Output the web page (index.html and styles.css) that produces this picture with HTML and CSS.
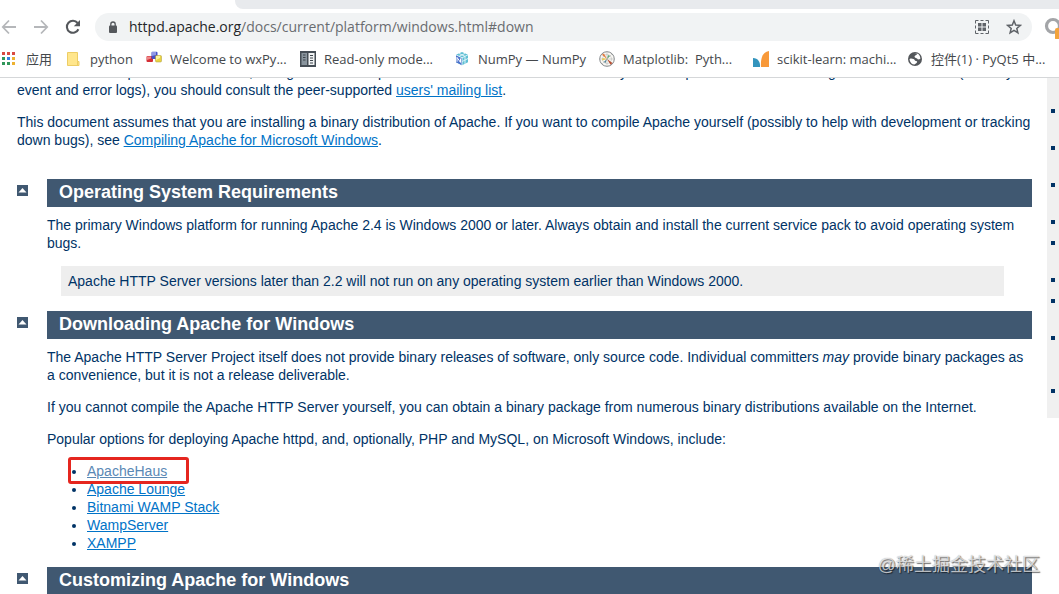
FILE: index.html
```html
<!DOCTYPE html>
<html lang="en">
<head>
<meta charset="utf-8">
<title>Using Apache HTTP Server on Microsoft Windows</title>
<link rel="stylesheet" href="styles.css">
</head>
<body>
<div class="browser">
  <header class="chrome">
    <div class="tab-strip"></div>
    <div class="toolbar">
      <button class="tool" aria-label="Back"><svg width="16" height="16" viewBox="0 0 16 16" fill="none" stroke="#b5b7ba" stroke-width="1.8"><path d="M15 8H2M8 1.5 1.8 8 8 14.5"/></svg></button>
      <button class="tool" aria-label="Forward"><svg width="16" height="16" viewBox="0 0 16 16" fill="none" stroke="#b5b7ba" stroke-width="1.8"><path d="M1 8h13M8 1.5 14.2 8 8 14.5"/></svg></button>
      <button class="tool" aria-label="Reload"><svg width="16" height="16" viewBox="0 0 16 16"><path d="M13.4 10.2A6 6 0 1 1 12.6 4" fill="none" stroke="#55585c" stroke-width="2.1"/><path d="M15 1v6.2H8.800z" fill="#55585c"/></svg></button>
      <div class="omnibox">
        <svg width="10" height="13" viewBox="0 0 10 13"><rect x="1" y="4.500" width="8" height="7.500" rx="1" fill="#55585c"/><path d="M2.800 5V3.200a2.200 2.200 0 0 1 4.400 0V5" fill="none" stroke="#55585c" stroke-width="1.300"/></svg>
        <div class="url"><span class="host">httpd.apache.org</span>/docs/current/platform/windows.html#down</div>
        <button class="tool" aria-label="QR code"><svg width="16" height="16" viewBox="0 0 16 16" fill="#5f6368"><path d="M4 4h3.500v3.500H4zM8.500 4H12v3.500H8.500zM4 8.500h3.500V12H4zM8.500 8.500H12V12H8.500z"/><path d="M1.500 4.500v-3h3M11.500 1.500h3v3M14.500 11.500v3h-3M4.500 14.500h-3v-3M6.500 1.500h3M6.500 14.500h3M1.500 6.500v3M14.500 6.500v3" fill="none" stroke="#5f6368"/></svg></button>
        <button class="tool" aria-label="Bookmark this page"><svg width="16" height="16" viewBox="0 0 16 16" fill="none" stroke="#5f6368" stroke-width="1.500"><path d="m8 1.800 1.700 4.300 4.600.3-3.500 3 1.100 4.500L8 11.400l-3.900 2.500 1.100-4.500-3.500-3 4.600-.3z"/></svg></button>
      </div>
      <button class="tool extension" aria-label="Extension"><svg width="18" height="24" viewBox="0 0 18 24"><circle cx="9" cy="11" r="6.500" fill="none" stroke="#a3a5a8" stroke-width="3.200"/><rect x="11" y="13" width="10" height="12" rx="2" fill="#f2a33c"/></svg></button>
    </div>
    <nav class="bookmarks" aria-label="Bookmarks">
      <a class="bookmark apps" href="#"><svg width="16" height="16" viewBox="0 0 16 16"><path d="M0 1h3v3H0zM5 1h3v3H5zM10 1h3v3h-3z" fill="#d94a41"/><path d="M0 6h3v3H0zM0 11h3v3H0z" fill="#31975a"/><path d="M5 6h3v3H5z" fill="#347fe0"/><path d="M5 11h3v3H5z" fill="#31975a"/><path d="M10 6h3v3h-3zM10 11h3v3h-3z" fill="#edb130"/></svg><span>应用</span></a>
      <a class="bookmark folder" href="#"><svg width="16" height="16" viewBox="0 0 16 16"><path d="M1.500 1.500h10v9h1.500v4H1.500z" fill="#ffe68c" stroke="#edcd65"/><path d="M11.500 10.500V14" stroke="#edcd65"/></svg><span>python</span></a>
      <a class="bookmark" href="#"><svg width="16" height="16" viewBox="0 0 16 16"><rect x=".5" y="5" width="6.500" height="6" rx="1" fill="#d42d35"/><path d="M1 5.500h4v2L1 9z" fill="#ed8887"/><rect x="5.500" y=".7" width="6" height="7.300" rx="1" fill="#4550c8"/><path d="M6 1h4v3L6 5z" fill="#9198e6"/><rect x="9.500" y="4.500" width="6" height="6.500" rx="1" fill="#ead340" stroke="#a99843" stroke-width=".5"/><path d="M10 5h4v2l-4 2z" fill="#faf3a0"/></svg><span>Welcome to wxPy...</span></a>
      <a class="bookmark" href="#"><svg width="16" height="16" viewBox="0 0 16 16"><path d="M0 0h16v16H0z" fill="#454d55"/><path d="M1.500 2H7v12H1.500z" fill="#89949d"/><path d="M8.500 2h6v12h-6z" fill="#f0f2f3"/><path d="M3 4h2.500M3 6.500h2.500M3 9h2.500M10 4.500h3M10 7h3M10 9.500h3M10 12h3" stroke="#3d454c"/></svg><span>Read-only mode...</span></a>
      <a class="bookmark short" href="#"><svg width="16" height="16" viewBox="0 0 16 16"><path d="m8 1 6 2.800v7.400L8 14.300l-6-3.100V3.800z" fill="#60bfd4"/><path d="m2 4 6 3v7.300l-6-3.100z" fill="#4d72cc"/><path d="m2 3.800 6 3 6-3M8 7v7M5 2.400l6 3v7.400M11 2.400 5 5.400M8.200 10.500l5.800-3" fill="none" stroke="#e5f6fa" stroke-width=".9"/><path d="M3 10.800V6.400l3.500 5V7.500" fill="none" stroke="#fff"/></svg><span>NumPy — NumPy</span></a>
      <a class="bookmark" href="#"><svg width="16" height="16" viewBox="0 0 16 16"><circle cx="8" cy="8" r="7.300" fill="#faf8f3" stroke="#85898c"/><circle cx="8" cy="8" r="4.500" fill="none" stroke="#c1c3c4" stroke-width=".7"/><path d="M8 1v14M1 8h14M3 13 13 3" stroke="#bec1c2" stroke-width=".7"/><path d="M8 8 2.800 3.800 5 2.500z" fill="#e17b43"/><path d="m8 8 5.500 4-2 1.800z" fill="#b74f34"/><path d="m8 8-5 1.500L3.500 7z" fill="#e8cd50"/><path d="m8 8 1-4 2 1z" fill="#5fa777"/><path d="m8 8-1.500 4L5 11z" fill="#4e8196"/></svg><span>Matplotlib: &nbsp;Pyth...</span></a>
      <a class="bookmark" href="#"><svg width="16" height="16" viewBox="0 0 16 16"><path d="M0 7c5 0 7.500 4 7 9H0z" fill="#3494bd"/><path d="M16 0v16H8C7.500 8 9 1 16 0z" fill="#f89939"/></svg><span>scikit-learn: machi...</span></a>
      <a class="bookmark" href="#"><svg width="16" height="16" viewBox="0 0 16 16"><circle cx="8" cy="8" r="7" fill="#54575b"/><path d="M2.500 8.500C3 7 5 7.500 6.500 8c1.500.5 1 2 2.500 2s1.500 1 .5 2l-2 1.500C5 13.500 3 11.500 2.500 8.500zM7 2.500l3 .5c0 1.500-2.500 1-2.500 2.500S10 7 11 8.500l2.300-.5c.2-2-.8-4-2.300-5.200z" fill="#fff"/></svg><span>控件(1) · PyQt5 中...</span></a>
    </nav>
  </header>

  <div class="viewport">
    <main class="page">
      <div class="intro">
        <p>This document explains how to install, configure and run Apache 2.4 under Microsoft Windows. If you have questions after reviewing the documentation (and any event and error logs), you should consult the peer-supported <a href="#">users' mailing list</a>.</p>
        <p>This document assumes that you are installing a binary distribution of Apache. If you want to compile Apache yourself (possibly to help with development or tracking down bugs), see <a href="#">Compiling Apache for Microsoft Windows</a>.</p>
      </div>

      <section class="topic">
        <a class="up" href="#" aria-label="Top"><svg width="11" height="11" viewBox="0 0 11 11"><path d="M0 0h11v11H0z" fill="#405871"/><path d="M5.500 3 9.500 7.500h-8z" fill="#fff"/></svg></a>
        <div class="body">
          <h2>Operating System Requirements</h2>
          <p>The primary Windows platform for running Apache 2.4 is Windows 2000 or later. Always obtain and install the current service pack to avoid operating system bugs.</p>
          <div class="note">Apache HTTP Server versions later than 2.2 will not run on any operating system earlier than Windows 2000.</div>
        </div>
      </section>

      <section class="topic" id="down">
        <a class="up" href="#" aria-label="Top"><svg width="11" height="11" viewBox="0 0 11 11"><path d="M0 0h11v11H0z" fill="#405871"/><path d="M5.500 3 9.500 7.500h-8z" fill="#fff"/></svg></a>
        <div class="body">
          <h2>Downloading Apache for Windows</h2>
          <p>The Apache HTTP Server Project itself does not provide binary releases of software, only source code. Individual committers <em>may</em> provide binary packages as a convenience, but it is not a release deliverable.</p>
          <p>If you cannot compile the Apache HTTP Server yourself, you can obtain a binary package from numerous binary distributions available on the Internet.</p>
          <p>Popular options for deploying Apache httpd, and, optionally, PHP and MySQL, on Microsoft Windows, include:</p>
          <ul class="options">
            <li class="marked"><a class="seen" href="#">ApacheHaus</a></li>
            <li><a href="#">Apache Lounge</a></li>
            <li><a href="#">Bitnami WAMP Stack</a></li>
            <li><a href="#">WampServer</a></li>
            <li><a href="#">XAMPP</a></li>
          </ul>
        </div>
      </section>

      <section class="topic">
        <a class="up" href="#" aria-label="Top"><svg width="11" height="11" viewBox="0 0 11 11"><path d="M0 0h11v11H0z" fill="#405871"/><path d="M5.500 3 9.500 7.500h-8z" fill="#fff"/></svg></a>
        <div class="body">
          <h2>Customizing Apache for Windows</h2>
        </div>
      </section>
    </main>
    <aside class="quickview">
      <ul>
        <li class="two"></li><li class="two"></li><li class="two"></li><li></li><li class="two"></li><li></li><li class="two"></li><li class="three"></li><li></li>
      </ul>
    </aside>
  </div>
  <div class="watermark">@稀土掘金技术社区</div>
</div>
</body>
</html>
```

FILE: styles.css
```css
*,
*::before,
*::after {
  box-sizing: border-box;
}

body {
  margin: 0;
  background: #fff;
  color: #036;
  font: 14px/18px "Liberation Sans", Arial, sans-serif;
}

svg {
  display: block;
  flex: none;
}

.browser {
  position: relative;
  display: flex;
  flex-direction: column;
  height: 100vh;
  overflow: hidden;
}

/* Browser chrome */
.chrome {
  flex: none;
  border-bottom: 1px solid #d5d7d9;
  font-family: "Open Sans", "Noto Sans CJK SC", sans-serif;
}

.tab-strip {
  height: 9px;
  margin-left: 235px;
  border-bottom-left-radius: 8px;
  background: #e8eaed;
}

.toolbar {
  display: flex;
  align-items: center;
  gap: 16px;
  height: 36px;
  padding-left: 1px;
}

.tool {
  display: flex;
  flex: none;
  padding: 0;
  border: 0;
  background: none;
}

.omnibox {
  display: flex;
  flex: 1;
  align-items: center;
  gap: 16px;
  height: 28px;
  margin-left: -2px;
  padding: 0 10px 0 13px;
  border-radius: 14px;
  background: #f1f3f4;
}

.url {
  flex: 1;
  margin-left: -5px;
  color: #696c70;
  font-size: 14px;
  line-height: 20px;
  white-space: nowrap;
}

.host {
  color: #242629;
}

.extension {
  width: 15px;
  margin-left: -4px;
  overflow: hidden;
}

.bookmarks {
  display: flex;
  align-items: center;
  gap: 17px;
  height: 32px;
  padding: 0 0 4px 2px;
  overflow: hidden;
}

.bookmark {
  display: flex;
  flex: none;
  align-items: center;
  gap: 8px;
  width: 137px;
  color: #45484c;
  font-size: 13px;
  text-decoration: none;
  white-space: nowrap;
}

.apps {
  width: 47px;
}

.folder {
  width: 63px;
}

.short {
  width: 128px;
}

/* Document */
.viewport {
  display: flex;
  flex: 1;
  align-items: flex-start;
  gap: 15px;
  min-height: 0;
  overflow: hidden;
}

.page {
  flex: 1;
  min-width: 0;
  margin-top: -15px;
  padding-left: 17px;
}

.intro {
  margin-bottom: 30px;
}

p {
  margin: 0 0 14px;
}

a {
  color: #0073c7;
}

.seen {
  color: #5a88b5;
}

.topic {
  display: flex;
  gap: 19px;
  margin-bottom: 15px;
}

.up {
  flex: none;
  padding-top: 6px;
}

.body {
  flex: 1;
}

h2 {
  margin: 0 0 9px;
  padding: 3px 12px 4px;
  background: #405871;
  color: #fff;
  font-size: 18px;
  line-height: 21px;
}

.note {
  margin: 0 28px 0 14px;
  padding: 6px 7px;
  background: #eee;
}

.options {
  margin: 0;
  padding-left: 40px;
}

.marked {
  position: relative;
}

.marked::after {
  position: absolute;
  top: -5px;
  left: -19px;
  width: 121px;
  height: 27px;
  border: 3px solid #e5261f;
  border-radius: 3px;
  content: "";
}

.quickview {
  flex: none;
  width: 12px;
  padding-top: 25px;
  background: #f0f0f0;
}

.quickview ul {
  margin: 0;
  padding: 0 0 14px 4px;
  list-style: none;
}

.quickview li {
  height: 21px;
  padding-top: 6px;
}

.quickview .two {
  height: 37px;
}

.quickview .three {
  height: 53px;
}

.quickview li::before {
  display: block;
  width: 4px;
  height: 4px;
  background: #036;
  content: "";
}

.watermark {
  position: absolute;
  right: 19px;
  bottom: 17px;
  color: rgba(255, 255, 255, 0.7);
  font: 18px/24px "Liberation Sans", "Noto Sans CJK SC", sans-serif;
  text-shadow: 1px 1px 1px rgba(0, 0, 0, 0.55), 0 0 1px rgba(0, 0, 0, 0.4);
}
```
